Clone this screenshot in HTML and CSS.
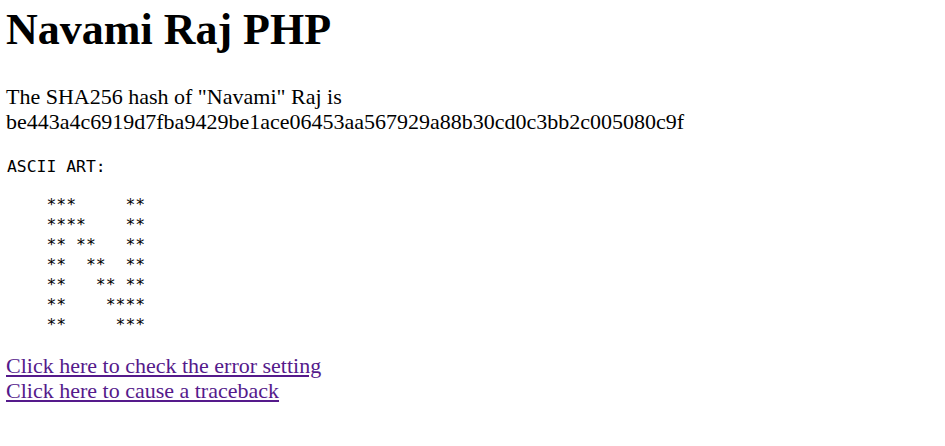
FILE: index.html
```html
<!DOCTYPE html>
<html>
<head>
<meta charset="utf-8">
<title>Navami Raj PHP</title>
<link rel="stylesheet" href="styles.css">
</head>
<body>
<h1 class="title">Navami Raj PHP</h1>
<p class="hash">The SHA256 hash of "Navami" Raj is<br>be443a4c6919d7fba9429be1ace06453aa567929a88b30cd0c3bb2c005080c9f</p>
<pre class="label">ASCII ART:</pre>
<pre class="art">    ***     **
    ****    **
    ** **   **
    **  **  **
    **   ** **
    **    ****
    **     ***</pre>
<div class="links">
<a class="link" href="#">Click here to check the error setting</a><br>
<a class="link" href="#">Click here to cause a traceback</a>
</div>
</body>
</html>
```
FILE: styles.css
```css
html, body {
  background: #fff;
}
body {
  margin: 0;
  padding: 5px 6px 0 6px;
  font-family: "Liberation Serif", "Times New Roman", serif;
  font-size: 22px;
  line-height: 25px;
  color: #000;
}
.title {
  margin: 0;
  font-size: 44px;
  line-height: 50px;
  font-weight: bold;
}
.hash {
  margin: 29px 0 0 0;
}
.label, .art {
  font-family: "DejaVu Sans Mono", monospace;
  font-size: 16.4px;
  line-height: 20px;
  margin: 0;
}
.label {
  margin-top: 23px;
}
.art {
  margin-top: 18px;
}
.art, .label {
  padding-left: 1px;
}
.links {
  margin-top: 18px;
}
.link {
  color: #551a8b;
  text-decoration: underline;
}
```
